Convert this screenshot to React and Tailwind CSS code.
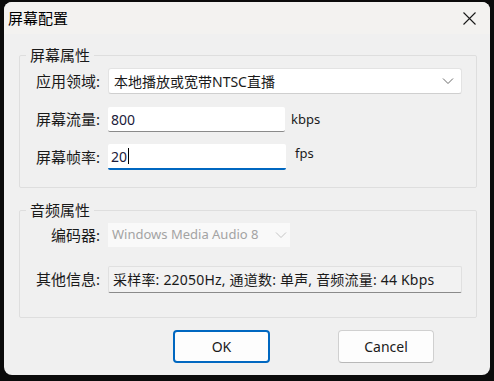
import React from 'react';

const font = { fontFamily: '"Noto Sans", "Noto Sans CJK SC", sans-serif' };

const Chevron = ({ color = '#6b6b6b' }) => (
  <svg width="12" height="8" viewBox="0 0 12 8" fill="none">
    <path d="M1 1.5 L6 6.5 L11 1.5" stroke={color} strokeWidth="1" />
  </svg>
);

const Label = ({ children }) => (
  <div className="w-[72px] shrink-0 text-right text-[15px] text-[#1a1a1a] leading-none">{children}</div>
);

const App = () => {
  return (
    <div className="w-[494px] h-[381px] bg-[#0b0b0b] pt-[2px] pl-[4px] overflow-hidden" style={font}>
      <div className="w-[486px] h-[373px] rounded-[8px] bg-[#f0f0f0] overflow-hidden flex flex-col">
        {/* Title bar */}
        <div className="h-[32px] bg-[#f3f2f0] flex items-center justify-between pl-[4px] pr-[14px]">
          <span className="text-[15px] text-black">屏幕配置</span>
          <svg width="13" height="13" viewBox="0 0 13 13">
            <path d="M0.5 0.5 L12.5 12.5 M12.5 0.5 L0.5 12.5" stroke="#1a1a1a" strokeWidth="1.1" />
          </svg>
        </div>

        <div className="flex flex-col pl-[15px] pr-[13px] pt-[11px]">
          {/* 屏幕属性 */}
          <fieldset className="border border-[#dedede] rounded-[2px] h-[143px] pl-[8px] pr-[14px]">
            <legend className="ml-[-2px] px-[4px] text-[15px] text-[#1a1a1a] leading-[20px]">屏幕属性</legend>
            <div className="flex items-center gap-[8px] mt-[3px]">
              <Label>应用领域:</Label>
              <div className="flex-1 h-[26px] bg-white border border-[#e3e3e3] border-b-[#cfcfcf] rounded-[3px] flex items-center justify-between pl-[5px] pr-[7px]">
                <span className="text-[14px] text-[#1a1a1a]">本地播放或宽带NTSC直播</span>
                <Chevron />
              </div>
            </div>
            <div className="flex items-center gap-[8px] mt-[13px]">
              <Label>屏幕流量:</Label>
              <div className="w-[177px] h-[25px] bg-white border-b border-[#8a8a8a] rounded-[2px] flex items-center pl-[3px]">
                <span className="text-[14px] text-[#1b1b3a]">800</span>
              </div>
              <span className="text-[13px] text-[#1a1a1a] ml-[-2px]">kbps</span>
            </div>
            <div className="flex items-start gap-[8px] mt-[12px]">
              <Label><div className="mt-[6px]">屏幕帧率:</div></Label>
              <div className="w-[178px] h-[26px] bg-white border-b-2 border-[#0067c0] rounded-[2px] flex items-center pl-[3px]">
                <span className="text-[14px] text-[#1b1b3a]">20</span>
                <span className="w-[1px] h-[16px] bg-black ml-[1px]" />
              </div>
              <span className="text-[13px] text-[#1a1a1a] ml-[1px]">fps</span>
            </div>
          </fieldset>

          {/* 音频属性 */}
          <fieldset className="border border-[#dedede] rounded-[2px] h-[118px] mt-[12px] pl-[8px] pr-[14px]">
            <legend className="ml-[-2px] px-[4px] text-[15px] text-[#1a1a1a] leading-[20px]">音频属性</legend>
            <div className="flex items-center gap-[8px] mt-[3px]">
              <Label>编码器:</Label>
              <div className="w-[182px] h-[24px] bg-[#f9f9f9] flex items-center justify-between pl-[4px] pr-[3px]">
                <span className="text-[13px] text-[#a3a3a3]">Windows Media Audio 8</span>
                <Chevron color="#c4c4c4" />
              </div>
            </div>
            <div className="flex items-center gap-[8px] mt-[19px]">
              <Label>其他信息:</Label>
              <div className="flex-1 h-[27px] bg-[#f2f2f2] border border-[#e0e0e0] border-b-[#8a8a8a] rounded-[2px] flex items-center pl-[4px]">
                <span className="text-[14px] text-[#1a1a1a] tracking-[0.2px]">采样率: 22050Hz, 通道数: 单声, 音频流量: 44 Kbps</span>
              </div>
            </div>
          </fieldset>

          {/* Buttons */}
          <div className="flex mt-[12px] pl-[154px] gap-[68px]">
            <button className="w-[97px] h-[33px] bg-[#fdfdfd] border-2 border-[#0067c0] rounded-[4px] text-[14px] text-[#1a1a1a]">OK</button>
            <button className="w-[96px] h-[33px] bg-[#fdfdfd] border border-[#d0d0d0] border-b-[#b8b8b8] rounded-[4px] text-[14px] text-[#1a1a1a]">Cancel</button>
          </div>
        </div>
      </div>
    </div>
  );
};

export default App;
